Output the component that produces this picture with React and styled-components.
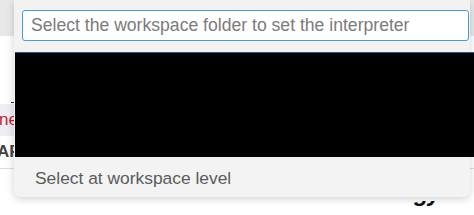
import React from 'react'
import styled, { createGlobalStyle } from 'styled-components'

const GlobalStyle = createGlobalStyle`
  html, body {
    margin: 0;
    padding: 0;
    background: #ffffff;
  }
  body {
    width: 474px;
    height: 215px;
    overflow: hidden;
    font-family: "Liberation Sans", Arial, sans-serif;
  }
`

const Page = styled.div`
  position: relative;
  width: 474px;
  height: 215px;
  overflow: hidden;
  background: #ffffff;
`

// editor content peeking out from behind the quick pick
const Backdrop = styled.div`
  display: flex;
  flex-direction: column;
  height: 100%;
`

const TopBand = styled.div`
  height: 36px;
  background: #e8e8e8;
`

const Band = styled.div`
  height: ${(p) => p.h}px;
  box-sizing: border-box;
  background: ${(p) => p.bg || 'transparent'};
  border-bottom: ${(p) => (p.line ? '1px solid #dcdcdc' : 'none')};
  display: flex;
  align-items: ${(p) => p.align || 'center'};
  justify-content: ${(p) => p.justify || 'flex-start'};
  padding-top: ${(p) => p.pt || 0}px;
  font-size: 17px;
  color: ${(p) => p.color || '#333'};
  font-weight: ${(p) => p.weight || 400};
  overflow: hidden;
`

const Dash = styled.span`
  display: block;
  width: 4px;
  height: 1.5px;
  background: #333;
  margin-left: 11px;
  margin-bottom: 1px;
`

const Peek = styled.span`
  margin-left: ${(p) => p.ml}px;
  white-space: nowrap;
`

const Descenders = styled.div`
  height: 5px;
  overflow: hidden;
  margin-right: 34px;
  line-height: 1;
`

const BigText = styled.span`
  display: block;
  margin-top: -20px;
  font-size: 24px;
  font-weight: 700;
  font-style: italic;
  color: #111;
  letter-spacing: -1px;
`

const Panel = styled.div`
  position: absolute;
  left: 14px;
  top: 0;
  width: 456px;
  background: #f3f2f1;
  border-radius: 0 0 7px 7px;
  box-shadow: 0 2px 8px rgba(0, 0, 0, 0.18);
  display: flex;
  flex-direction: column;
`

const InputRow = styled.div`
  padding: 10px 1px 11px 8px;
`

const Input = styled.div`
  height: 31px;
  box-sizing: border-box;
  border: 1.5px solid #3d9de6;
  border-radius: 3px;
  background: #ffffff;
  display: flex;
  align-items: center;
  padding-left: 8px;
  font-size: 17.6px;
  color: #7b7b7b;
  white-space: nowrap;
  overflow: hidden;
`

const Redacted = styled.div`
  height: 105px;
  margin: 0 -4px 0 1px;
  background: #000000;
  border-top: 1px solid #1d5c9c;
  box-sizing: border-box;
`

const Item = styled.div`
  height: 40px;
  display: flex;
  align-items: center;
  padding-left: 21px;
  padding-top: 3px;
  box-sizing: border-box;
  font-size: 17.4px;
  color: #5b5b5b;
  background: #f3f3f3;
  border-radius: 0 0 7px 7px;
`

export default function App() {
  return (
    <>
      <GlobalStyle />
      <Page>
        <Backdrop>
          <TopBand />
          <Band h={68} align="flex-end">
            <Dash />
          </Band>
          <Band h={32} bg="#eeedf6" color="#c0262d">
            <Peek ml={-1}>ne</Peek>
          </Band>
          <Band h={33} line color="#444" weight={700}>
            <Peek ml={-3}>AF</Peek>
          </Band>
          <Band h={46} pt={32} align="flex-start" justify="flex-end">
            <Descenders>
              <BigText>gy</BigText>
            </Descenders>
          </Band>
        </Backdrop>
        <Panel>
          <InputRow>
            <Input>Select the workspace folder to set the interpreter</Input>
          </InputRow>
          <Redacted />
          <Item>Select at workspace level</Item>
        </Panel>
      </Page>
    </>
  )
}
